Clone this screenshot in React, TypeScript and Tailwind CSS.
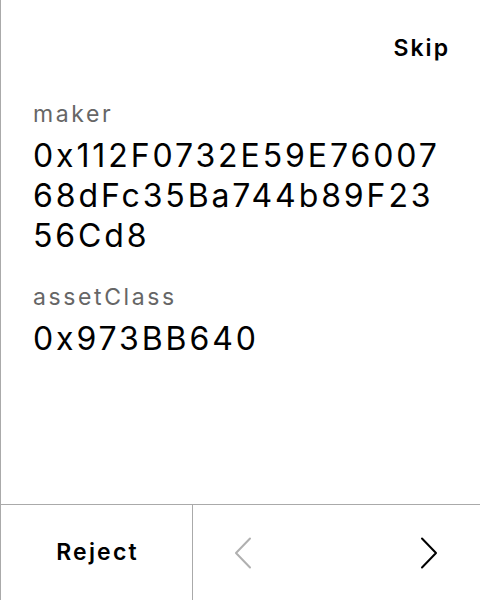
const fields = [
  { label: "maker", value: "0x112F0732E59E7600768dFc35Ba744b89F2356Cd8" },
  { label: "assetClass", value: "0x973BB640" },
];

function Chevron({ dir, className }: { dir: "left" | "right"; className?: string }) {
  return (
    <svg width="18" height="32" viewBox="0 0 18 32" fill="none" className={className}>
      <polyline
        points={dir === "left" ? "16,1.5 2,16 16,30.5" : "2,1.5 16,16 2,30.5"}
        stroke="currentColor"
        strokeWidth="2"
        strokeLinecap="round"
        strokeLinejoin="round"
      />
    </svg>
  );
}

export default function App() {
  return (
    <div
      className="flex flex-col h-[600px] w-[480px] bg-white border-l border-[#aaaaaa] text-black"
      style={{ fontFamily: "Inter, 'Noto Sans', sans-serif" }}
    >
      {/* Header */}
      <div className="flex justify-end pl-8 pr-[30px] pt-8">
        <button className="text-[23px] font-semibold leading-[32px] tracking-[2px]">Skip</button>
      </div>

      {/* Fields */}
      <div className="flex-1 flex flex-col gap-[26px] px-8 pt-[35px]">
        {fields.map((f) => (
          <div key={f.label} className="flex flex-col gap-[7px]">
            <span className="text-[23px] leading-[30px] tracking-[2.6px] text-[#666666]">
              {f.label}
            </span>
            <span className="text-[32px] leading-[40px] tracking-[2.9px] break-all">{f.value}</span>
          </div>
        ))}
      </div>

      {/* Bottom bar */}
      <div className="flex h-24 border-t border-[#aaaaaa]">
        <button className="w-[192px] border-r border-[#aaaaaa] text-[23px] font-semibold tracking-[2.2px] pl-[2px]">
          Reject
        </button>
        <div className="flex-1 flex items-center justify-between pl-[41px] pr-[42px]">
          <Chevron dir="left" className="text-[#b0b0b0]" />
          <Chevron dir="right" className="text-black" />
        </div>
      </div>
    </div>
  );
}
